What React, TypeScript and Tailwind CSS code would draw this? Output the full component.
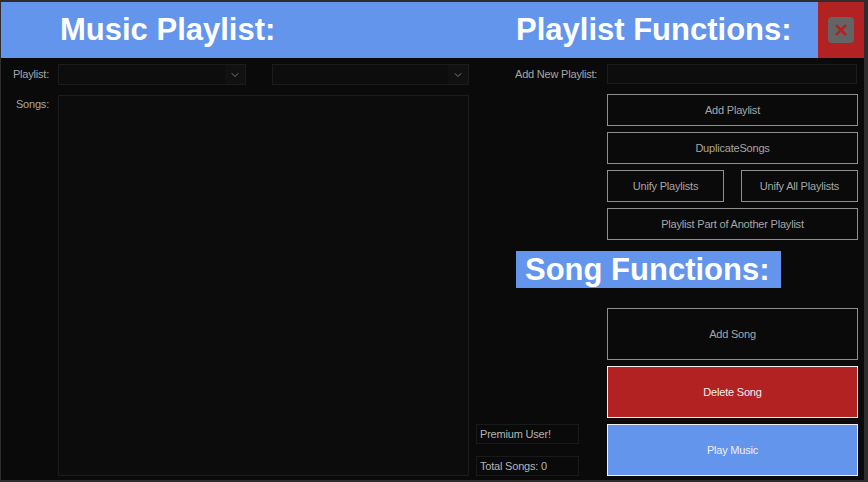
import { ChevronDown } from 'lucide-react';

const label = "text-[11px] text-[#a6a6a6] tracking-[-0.2px] font-['Liberation_Sans',Arial,sans-serif]";
const title = "text-[31px] font-bold text-white leading-[32px] font-['Liberation_Sans',Arial,sans-serif] whitespace-nowrap";

function Combo({ width }: { width: string }) {
  return (
    <div className={`${width} h-[21px] flex bg-[#0d0d0d] border border-[#1c1c1c]`}>
      <div className="flex-1" />
      <div className="w-[20px] h-full bg-[#111111] flex items-center justify-center">
        <ChevronDown className="w-[12px] h-[12px] text-[#9a9a9a]" strokeWidth={1.5} />
      </div>
    </div>
  );
}

function OutlineButton({ text, className }: { text: string; className: string }) {
  return (
    <button className={`${className} border border-[#8f8f8f] bg-[#0a0a0a] flex items-center justify-center ${label}`}>
      {text}
    </button>
  );
}

export default function App() {
  return (
    <div className="w-[868px] h-[482px] bg-[#2d2d2d] pl-[1px] pt-[2px] pr-[4px] pb-[2px]">
      <div className="w-[863px] h-[478px] bg-[#0a0a0a] flex flex-col">
        {/* title bar */}
        <div className="h-[56px] flex shrink-0">
          <div className="w-[817px] bg-[#6495ed] flex items-center pl-[59px]">
            <span className={`${title} w-[456px]`}>Music Playlist:</span>
            <span className={title}>Playlist Functions:</span>
          </div>
          <div className="w-[46px] bg-[#b22222] flex items-center justify-center">
            <div className="w-[26px] h-[26px] rounded-[4px] bg-[#646464] flex items-center justify-center">
              <svg width="12" height="12" viewBox="0 0 12 12">
                <path d="M2 2L10 10M10 2L2 10" stroke="#b22222" strokeWidth="2.6" strokeLinecap="square" />
              </svg>
            </div>
          </div>
        </div>

        <div className="flex flex-1 pt-[6px]">
          {/* left panel */}
          <div className="w-[468px] flex flex-col">
            <div className="flex items-center h-[21px]">
              <div className={`w-[57px] pr-[9px] text-right ${label}`}>Playlist:</div>
              <Combo width="w-[188px]" />
              <div className="w-[26px]" />
              <Combo width="w-[197px]" />
            </div>
            <div className="flex mt-[10px]">
              <div className={`w-[57px] pr-[9px] text-right pt-[1px] ${label}`}>Songs:</div>
              <div className="w-[411px] h-[381px] bg-[#0c0c0c] border border-[#1c1c1c]" />
            </div>
          </div>

          {/* right panel */}
          <div className="flex-1 flex flex-col">
            <div className="flex items-center h-[20px]">
              <div className={`w-[138px] pl-[46px] ${label}`}>Add New Playlist:</div>
              <div className="w-[250px] h-[20px] bg-[#0d0d0d] border border-[#1c1c1c]" />
            </div>

            <div className="ml-[138px] w-[251px] mt-[10px] flex flex-col gap-[6px]">
              <OutlineButton text="Add Playlist" className="w-full h-[32px]" />
              <OutlineButton text="DuplicateSongs" className="w-full h-[32px]" />
              <div className="flex justify-between">
                <OutlineButton text="Unify Playlists" className="w-[117px] h-[32px]" />
                <OutlineButton text="Unify All Playlists" className="w-[117px] h-[32px]" />
              </div>
              <OutlineButton text="Playlist Part of Another Playlist" className="w-full h-[32px]" />
            </div>

            <div className="ml-[47px] mt-[11px] w-[265px] h-[37px] bg-[#6495ed] flex items-center pl-[9px]">
              <span className={title}>Song Functions:</span>
            </div>

            <div className="flex items-end mt-[20px]">
              <div className="ml-[7px] w-[103px] flex flex-col gap-[12px]">
                <div className={`h-[20px] border border-[#1a1a1a] flex items-center pl-[3px] ${label} text-[#b5b5b5]`}>Premium User!</div>
                <div className={`h-[20px] border border-[#1a1a1a] flex items-center pl-[3px] ${label} text-[#b5b5b5]`}>Total Songs: 0</div>
              </div>
              <div className="ml-[28px] w-[251px] flex flex-col gap-[6px]">
                <OutlineButton text="Add Song" className="w-full h-[52px]" />
                <button className={`w-full h-[52px] bg-[#b22222] border border-[#f0f0f0] flex items-center justify-center ${label} text-[#f0f0f0]`}>
                  Delete Song
                </button>
                <button className={`w-full h-[52px] bg-[#6495ed] border border-[#f0f0f0] flex items-center justify-center ${label} text-[#f0f0f0]`}>
                  Play Music
                </button>
              </div>
            </div>
          </div>
        </div>
      </div>
    </div>
  );
}
